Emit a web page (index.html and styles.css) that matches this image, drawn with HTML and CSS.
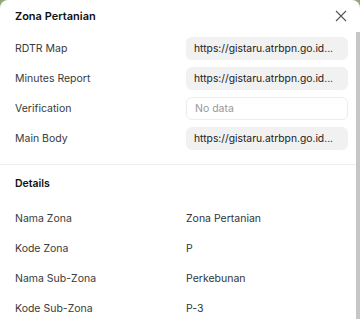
FILE: index.html
```html
<!DOCTYPE html>
<html lang="id">
<head>
  <meta charset="UTF-8" />
  <meta name="viewport" content="width=device-width, initial-scale=1.0"/>
  <title>Zona Pertanian</title>
  <link rel="stylesheet" href="styles.css">
</head>
<body>
  <div class="modal">
    <div class="modal-head">
      <h3>Zona Pertanian</h3>
      <button class="close" title="Tutup">
        <svg width="12" height="12" viewBox="0 0 12 12"><path d="M1 1L11 11M11 1L1 11" stroke="#555" stroke-width="1.1" fill="none"/></svg>
      </button>
    </div>
    <div class="modal-body">
      <div class="content">
        <div class="section links">
          <div class="row">
            <span class="label">RDTR Map</span>
            <span class="pill">https://gistaru.atrbpn.go.id...</span>
          </div>
          <div class="row">
            <span class="label">Minutes Report</span>
            <span class="pill">https://gistaru.atrbpn.go.id...</span>
          </div>
          <div class="row">
            <span class="label">Verification</span>
            <span class="pill empty">No data</span>
          </div>
          <div class="row">
            <span class="label">Main Body</span>
            <span class="pill">https://gistaru.atrbpn.go.id...</span>
          </div>
        </div>
        <div class="section details">
          <h4>Details</h4>
          <div class="row">
            <span class="label">Nama Zona</span>
            <span class="value">Zona Pertanian</span>
          </div>
          <div class="row">
            <span class="label">Kode Zona</span>
            <span class="value">P</span>
          </div>
          <div class="row">
            <span class="label">Nama Sub-Zona</span>
            <span class="value">Perkebunan</span>
          </div>
          <div class="row">
            <span class="label">Kode Sub-Zona</span>
            <span class="value">P-3</span>
          </div>
        </div>
      </div>
      <div class="scrollbar"></div>
    </div>
  </div>
</body>
</html>
```
FILE: styles.css
```css
html, body { margin: 0; height: 100%; }
body { font-family: Inter, "Noto Sans", sans-serif; background: #8fa77a; overflow: hidden; }
.modal { width: 360px; height: 319px; background: #fff; border-radius: 8px 8px 0 0; display: flex; flex-direction: column; }
.modal-head { height: 31px; padding: 0 15px; display: flex; align-items: center; justify-content: space-between; flex-shrink: 0; }
.modal-head h3 { margin: 0; font-size: 11px; font-weight: 600; color: #111; }
.close { background: none; border: none; padding: 0; margin-right: -4px; width: 16px; height: 16px; display: flex; align-items: center; justify-content: center; cursor: pointer; }
.modal-body { flex: 1; display: flex; overflow: hidden; }
.content { flex: 1; }
.scrollbar { width: 4px; margin-top: 1px; background: #c6c6c6; flex-shrink: 0; }
.section { padding: 2px 8px 11px 15px; }
.links { border-bottom: 1px solid #ececec; }
.details { padding-top: 8px; }
.details h4 { margin: 0 0 8px; height: 22px; line-height: 22px; font-size: 10.5px; font-weight: 600; color: #111; }
.row { display: grid; grid-template-columns: 171px 1fr; align-items: center; height: 30px; font-size: 10.5px; color: #333; }
.label { color: #3a3a3a; }
.pill { height: 23px; line-height: 23px; padding: 0 8px; border-radius: 6px; background: #f1f1f1; color: #222; font-size: 10.3px; white-space: nowrap; overflow: hidden; }
.pill.empty { background: #fff; border: 1px solid #ececec; height: 21px; line-height: 21px; color: #999; font-size: 10.5px; }
.value { color: #333; }
```
